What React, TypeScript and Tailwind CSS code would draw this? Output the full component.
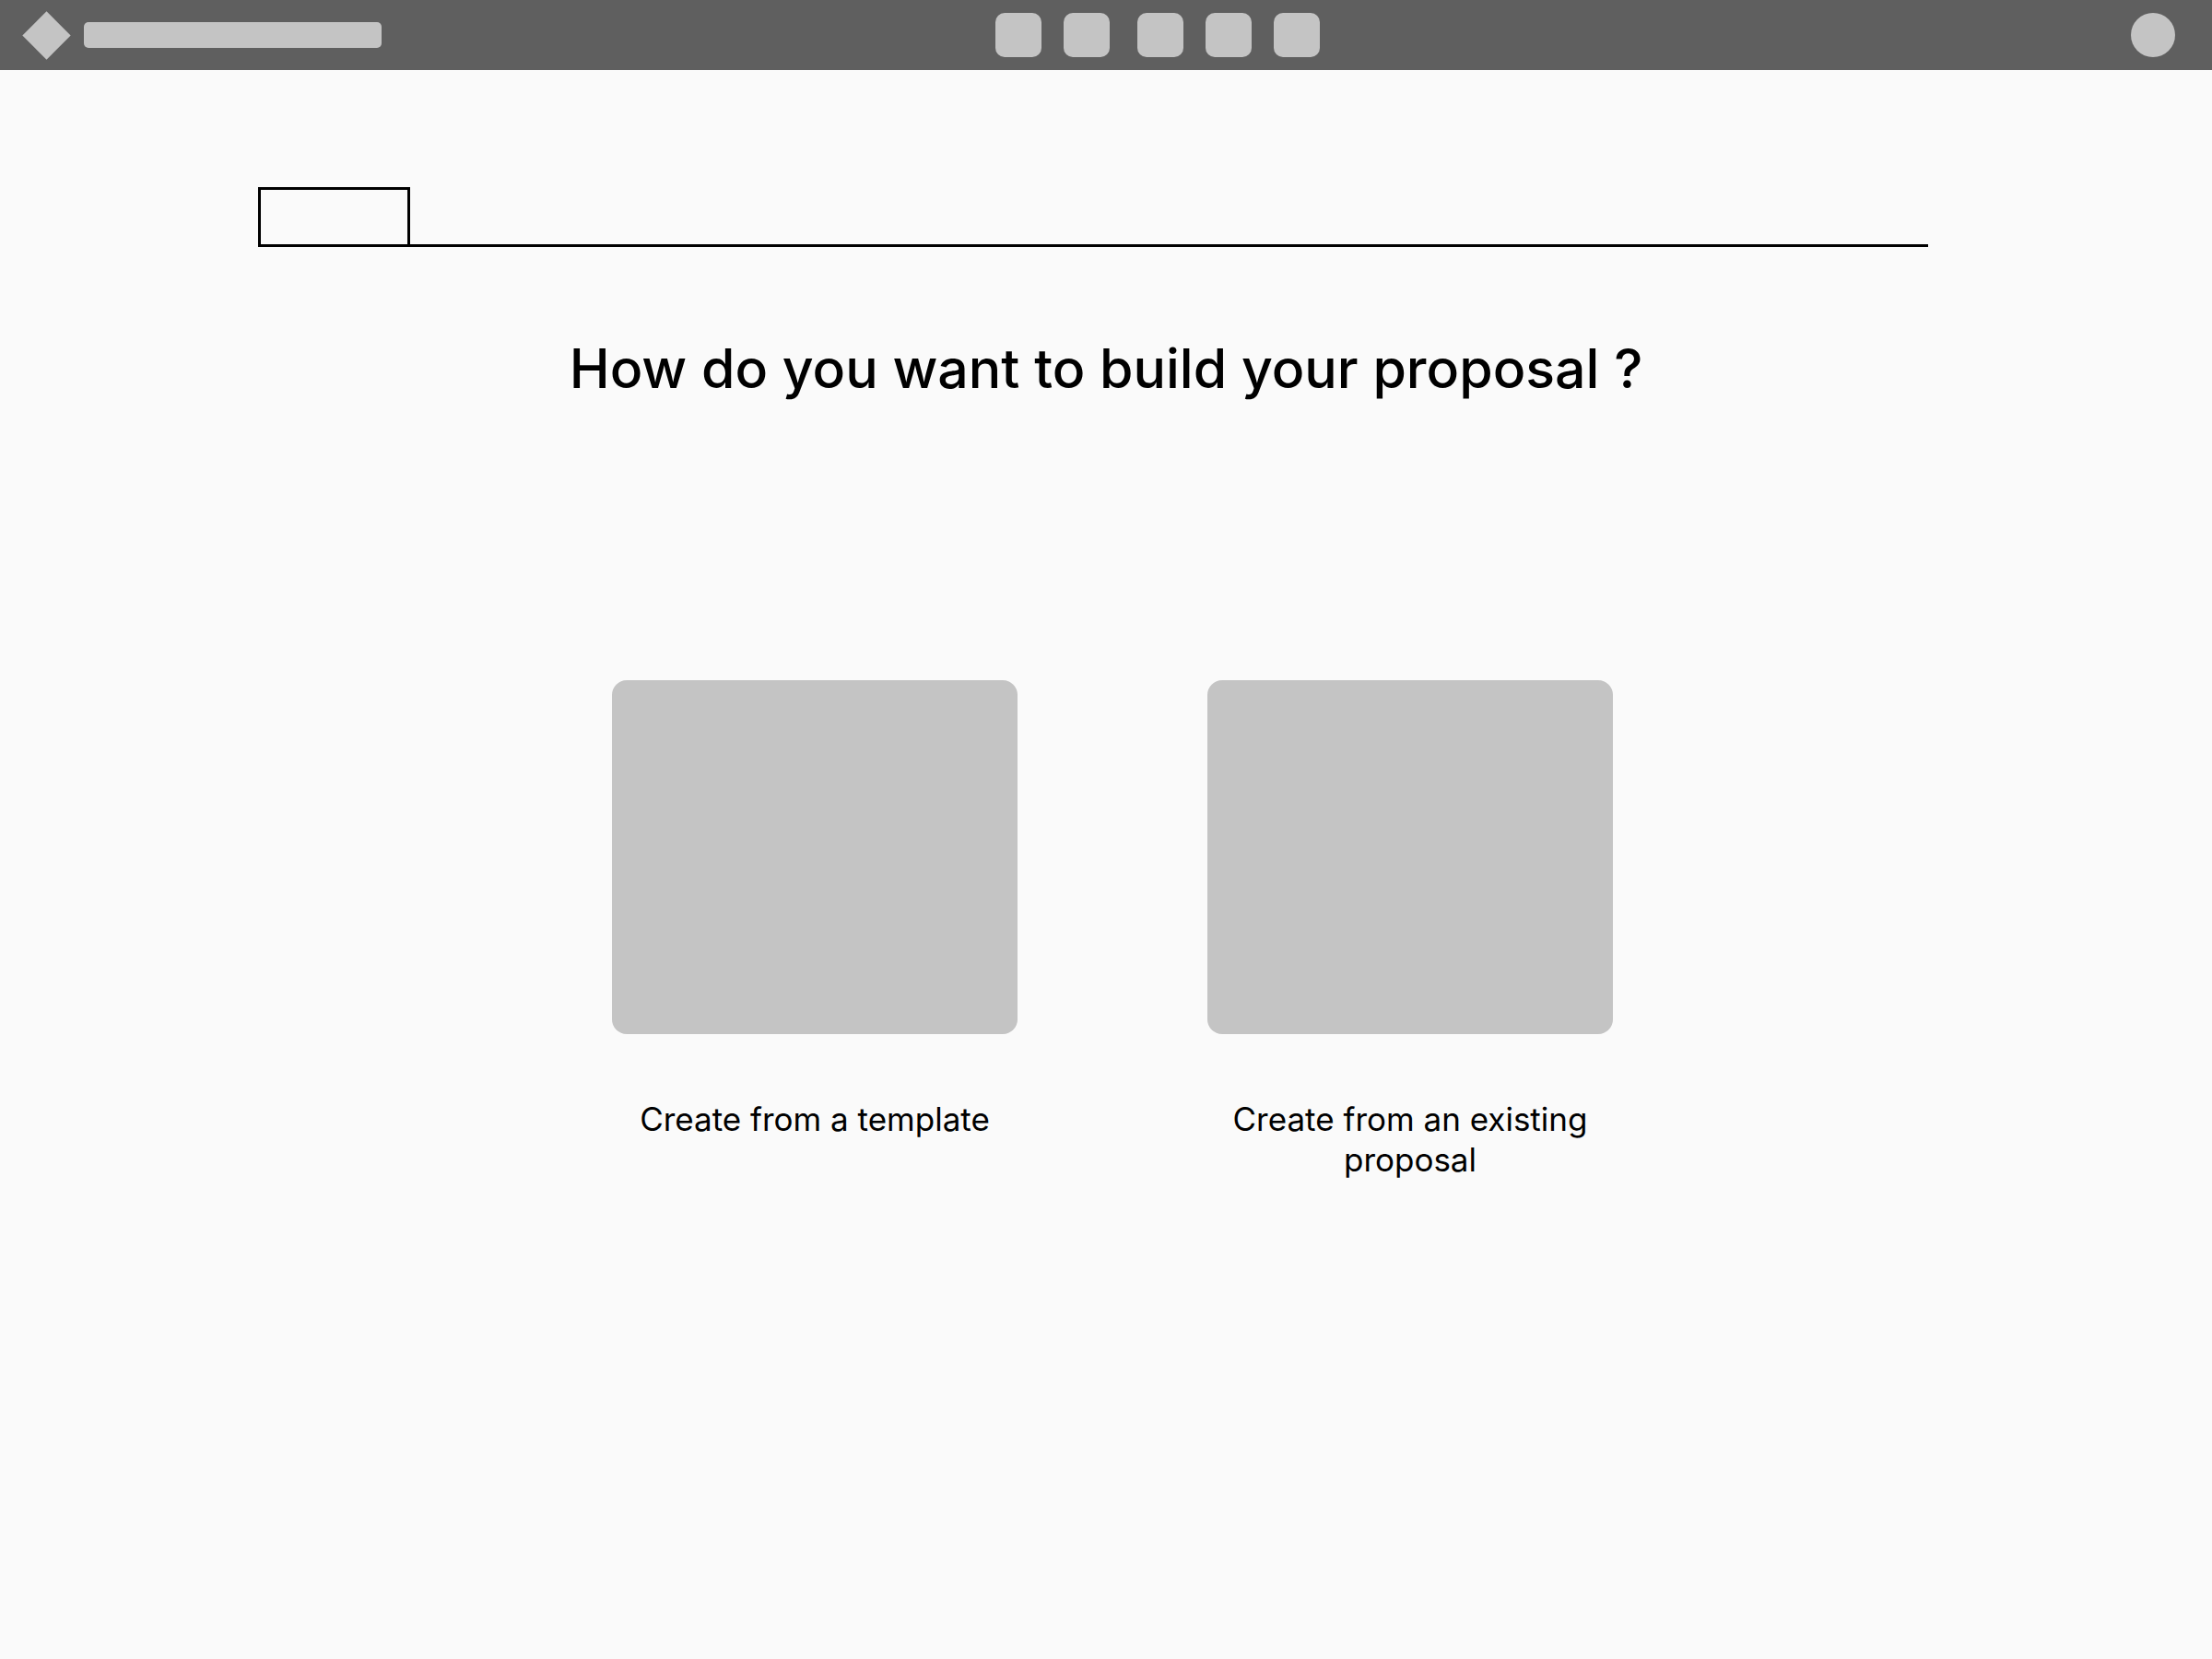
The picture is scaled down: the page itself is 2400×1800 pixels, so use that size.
const navSquares = ['ml-0', 'ml-[24px]', 'ml-[30px]', 'ml-[24px]', 'ml-[24px]'];

const OptionCard = ({ label }: { label: string }) => (
  <button className="flex w-[440px] flex-col items-center">
    <div className="h-[384px] w-[440px] rounded-[16px] bg-[#c4c4c4]" />
    <p className="mt-[70px] w-[400px] text-center text-[35px] leading-[44px] text-black">
      {label}
    </p>
  </button>
);

export default function App() {
  return (
    <div className="min-h-[1800px] w-full bg-[#fafafa] font-['Inter',sans-serif]">
      <nav className="flex h-[76px] w-full items-center bg-[#5f5f5f] pl-[24px] pr-[40px]">
        <div className="flex h-[52px] w-[52px] items-center justify-center">
          <div className="h-[37px] w-[37px] rotate-45 bg-[#c4c4c4]" />
        </div>
        <div className="ml-[15px] h-[28px] w-[323px] rounded-[5px] bg-[#c4c4c4]" />

        <div className="ml-[666px] flex items-center">
          {navSquares.map((m, i) => (
            <div key={i} className={`${m} h-[48px] w-[50px] rounded-[10px] bg-[#c4c4c4]`} />
          ))}
        </div>

        <div className="ml-auto h-[48px] w-[48px] rounded-full bg-[#c4c4c4]" />
      </nav>

      <main className="flex flex-col items-center">
        <div className="mt-[127px] flex w-[1812px] items-end self-start ml-[280px]">
          <div className="h-[65px] w-[165px] border-[3px] border-black" />
          <div className="flex-1 border-b-[3px] border-black" />
        </div>

        <h1 className="mt-[96px] text-[59px] font-medium leading-[72px] text-black">
          How do you want to build your proposal ?
        </h1>

        <div className="mt-[302px] ml-[14px] flex gap-[206px]">
          <OptionCard label="Create from a template" />
          <OptionCard label="Create from an existing proposal" />
        </div>
      </main>
    </div>
  );
}
